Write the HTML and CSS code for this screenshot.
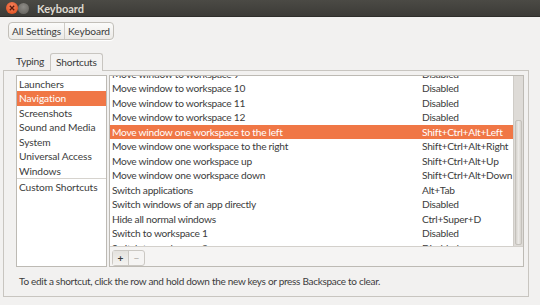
FILE: index.html
```html
<!DOCTYPE html>
<html lang="en">
<head>
    <meta charset="UTF-8">
    <title>Keyboard</title>
    <link rel="stylesheet" href="styles.css">
</head>
<body>
    <div class="titlebar">
        <span class="btn-close">
            <svg width="12" height="12" viewBox="0 0 12 12"><path d="M3.8 3.8 L8.2 8.2 M8.2 3.8 L3.8 8.2" stroke="#5a1a0c" stroke-width="1.3"/></svg>
        </span>
        <span class="btn-min"></span>
        <span class="title">Keyboard</span>
    </div>

    <div class="toolbar">
        <div class="crumbs">
            <span class="crumb">All Settings</span>
            <span class="crumb">Keyboard</span>
        </div>
    </div>

    <div class="tabs">
        <span class="tab">Typing</span>
        <span class="tab active">Shortcuts</span>
    </div>

    <div class="notebook">
        <div class="panes">
            <ul class="categories">
                <li>Launchers</li>
                <li class="selected">Navigation</li>
                <li>Screenshots</li>
                <li>Sound and Media</li>
                <li>System</li>
                <li>Universal Access</li>
                <li class="last">Windows</li>
                <li>Custom Shortcuts</li>
            </ul>
            <div class="shortcuts">
                <div class="list">
                    <div class="rows">
                        <div class="row"><span class="name">Move window to workspace 9</span><span>Disabled</span></div>
                        <div class="row"><span class="name">Move window to workspace 10</span><span>Disabled</span></div>
                        <div class="row"><span class="name">Move window to workspace 11</span><span>Disabled</span></div>
                        <div class="row"><span class="name">Move window to workspace 12</span><span>Disabled</span></div>
                        <div class="row selected"><span class="name">Move window one workspace to the left</span><span>Shift+Ctrl+Alt+Left</span></div>
                        <div class="row"><span class="name">Move window one workspace to the right</span><span>Shift+Ctrl+Alt+Right</span></div>
                        <div class="row"><span class="name">Move window one workspace up</span><span>Shift+Ctrl+Alt+Up</span></div>
                        <div class="row"><span class="name">Move window one workspace down</span><span>Shift+Ctrl+Alt+Down</span></div>
                        <div class="row"><span class="name">Switch applications</span><span>Alt+Tab</span></div>
                        <div class="row"><span class="name">Switch windows of an app directly</span><span>Disabled</span></div>
                        <div class="row"><span class="name">Hide all normal windows</span><span>Ctrl+Super+D</span></div>
                        <div class="row"><span class="name">Switch to workspace 1</span><span>Disabled</span></div>
                        <div class="row"><span class="name">Switch to workspace 2</span><span>Disabled</span></div>
                    </div>
                    <div class="scrollbar"><div class="thumb"></div></div>
                </div>
                <div class="list-tools">
                    <div class="tool-group">
                        <span class="tool pressed">+</span>
                        <span class="tool dim">&minus;</span>
                    </div>
                </div>
            </div>
        </div>
        <p class="hint">To edit a shortcut, click the row and hold down the new keys or press Backspace to clear.</p>
    </div>
</body>
</html>
```

FILE: styles.css
```css
body {
    margin: 0;
    background: #f2f1f0;
    font-family: Lato, "Noto Sans", sans-serif;
    font-size: 10.2px;
    letter-spacing: -0.25px;
    color: #3c3c3c;
    width: 540px;
    height: 305px;
    overflow: hidden;
}
.titlebar {
    height: 16px;
    background: linear-gradient(#4b4a45, #3c3b37);
    display: flex;
    align-items: center;
    padding-left: 6px;
    border-bottom: 1px solid #2f2e2b;
}
.btn-close {
    width: 12px;
    height: 12px;
    border-radius: 50%;
    background: radial-gradient(circle at 50% 35%, #f7835f, #dd4814);
    display: flex;
}
.btn-min {
    width: 11px;
    height: 11px;
    border-radius: 50%;
    background: radial-gradient(circle at 50% 35%, #8e8c87, #5f5d58);
}
.title {
    color: #dfdbd2;
    font-weight: bold;
    margin-left: 8px;
    font-size: 11px;
    letter-spacing: 0;
}
.toolbar {
    padding: 5px 8px 0;
    height: 31px;
}
.crumbs {
    display: inline-flex;
    border: 1px solid #c2bfb9;
    border-radius: 4px;
    background: linear-gradient(#fbfbfa, #eceae7);
    height: 16px;
    box-shadow: 0 1px 0 #fff;
}
.crumb {
    padding: 0 3px;
    line-height: 16px;
    letter-spacing: -0.1px;
}
.crumb + .crumb {
    border-left: 1px solid #cfccc7;
}
.tabs {
    display: flex;
    align-items: flex-end;
    padding-left: 12px;
    height: 17px;
}
.tab {
    padding: 0 4px;
    line-height: 17px;
}
.tab.active {
    margin-left: 2px;
    padding: 0 5px;
    border: 1px solid #c8c5c0;
    border-bottom: none;
    border-radius: 3px 3px 0 0;
    background: #f4f3f2;
    height: 17px;
    position: relative;
    top: 1px;
}
.notebook {
    margin: 0 11px 0 3px;
    border: 1px solid #c8c5c0;
    height: 221px;
    padding: 4px 4px 0 12px;
}
.panes {
    display: flex;
    height: 192px;
}
.categories {
    list-style: none;
    margin: 0;
    padding: 0;
    width: 89px;
    flex: none;
    border: 1px solid #bdbab4;
    background: #fff;
    overflow: hidden;
}
.categories li {
    height: 14.5px;
    line-height: 14.5px;
    padding-left: 2px;
    white-space: nowrap;
    letter-spacing: -0.1px;
}
.categories li:first-child {
    margin-top: 0.5px;
}
.categories li.last {
    border-bottom: 1px solid #d6d3ce;
    margin-bottom: 1px;
}
.selected {
    background: #f07746;
    color: #fff;
}
.shortcuts {
    margin-left: 2px;
    flex: 1;
    min-width: 0;
    display: flex;
    flex-direction: column;
    border: 1px solid #bdbab4;
}
.list {
    height: 170px;
    background: #fff;
    display: flex;
    overflow: hidden;
    border-bottom: 1px solid #d3d0cb;
}
.rows {
    flex: 1;
    min-width: 0;
    margin-top: -9.5px;
}
.row {
    display: flex;
    height: 14.5px;
    line-height: 14.5px;
    padding-left: 2px;
    white-space: nowrap;
}
.name {
    width: 310px;
    flex: none;
}
.scrollbar {
    width: 9px;
    flex: none;
    background: #dedbd7;
    border-left: 1px solid #cfccc7;
    display: flex;
    flex-direction: column;
}
.thumb {
    margin: 44px 1px 1px;
    flex: 1;
    background: linear-gradient(90deg, #d6d3ce, #ebe9e6, #d6d3ce);
    border: 1px solid #c4c1bb;
    border-radius: 2px;
}
.list-tools {
    flex: 1;
    background: #f5f4f3;
    padding: 3px 0 0 2px;
}
.tool-group {
    display: inline-flex;
    border: 1px solid #cbc8c3;
    border-radius: 3px;
    height: 14px;
}
.tool {
    width: 15px;
    text-align: center;
    line-height: 14px;
    font-weight: bold;
    letter-spacing: 0;
}
.tool.pressed {
    background: linear-gradient(#e4e2de, #f4f3f1);
    border-right: 1px solid #cbc8c3;
}
.tool.dim {
    color: #a9a6a1;
    font-weight: normal;
}
.hint {
    margin: 7px 0 0 3px;
    line-height: 14px;
    white-space: nowrap;
    font-size: 10px;
    letter-spacing: -0.3px;
}
```
